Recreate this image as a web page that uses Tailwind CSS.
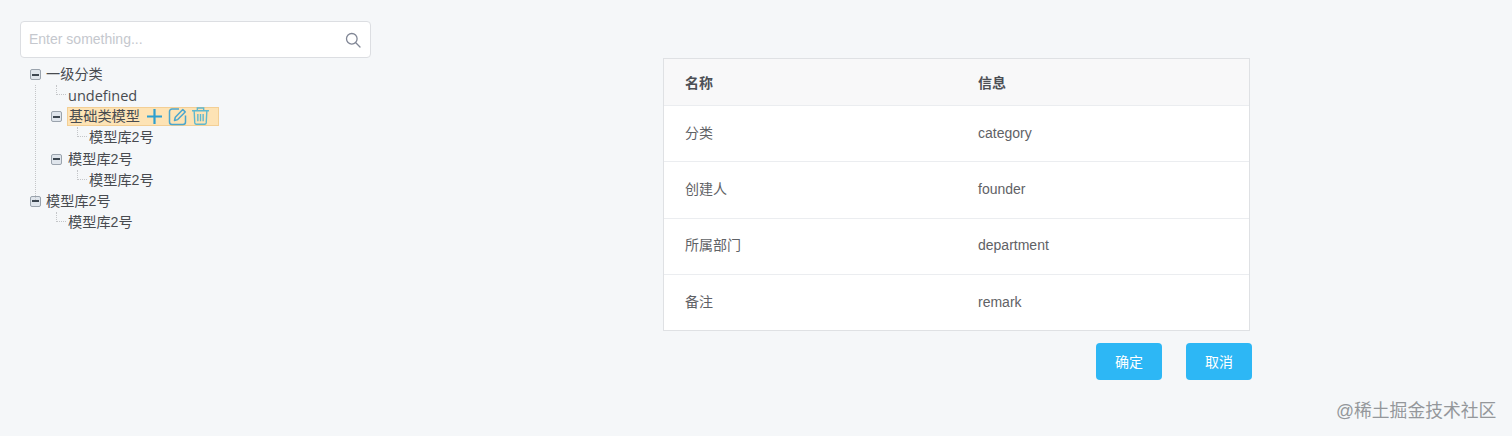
<!DOCTYPE html>
<html lang="en">

<head>
    <meta charset="UTF-8">
    <meta name="viewport" content="width=device-width, initial-scale=1.0">
    <script src="https://cdn.jsdelivr.net/npm/@tailwindcss/browser@4"></script>
    <title>Model tree</title>
</head>

<body class="relative h-[436px] overflow-hidden bg-[#f5f7f9] font-['Liberation_Sans','Noto_Sans_CJK_SC',sans-serif]">
    <div class="flex items-start">
        <!-- Left: search + tree -->
        <div class="ml-5 mt-[21px] w-[351px]">
            <div class="flex h-[37px] items-center justify-between rounded-[4px] border border-[#dcdee2] bg-white pb-0.5 pl-2 pr-2.5">
                <span class="text-sm text-[#c5c8ce]">Enter something...</span>
                <svg class="mr-[-1px] mt-0.5 h-4 w-4 text-[#808695]" viewBox="0 0 16 16" fill="none" stroke="currentColor" stroke-width="1.3">
                    <circle cx="6.8" cy="6.8" r="5.3"></circle>
                    <path d="M10.8 10.8l4.2 4.2" stroke-linecap="round"></path>
                </svg>
            </div>

            <ul class="relative mt-[6px] text-[14.2px] leading-[21px] text-[#484b50]">
                <span class="absolute left-[15px] top-[21px] h-[115px] border-l border-dotted border-[#c4c6c9]"></span>

                <li class="flex h-[21.150px] items-center pl-2.5">
                    <span class="mr-[5px] flex h-[11px] w-[11px] items-center justify-center rounded-[2px] border border-[#9aa3ad] bg-[#dfe5ec]"><span class="h-0.5 w-[7px] bg-[#3c4650]"></span></span>
                    <span>一级分类</span>
                </li>
                <li class="relative flex h-[21.150px] items-center pl-12">
                    <span class="absolute left-9 top-0 h-2.5 w-2.5 border-b border-l border-dotted border-[#c4c6c9]"></span>
                    <span class="font-['Open_Sans',sans-serif] text-[14.5px]">undefined</span>
                </li>

                <li class="flex h-[21.150px] items-center pl-[31px]">
                    <span class="mr-[5px] flex h-[11px] w-[11px] items-center justify-center rounded-[2px] border border-[#9aa3ad] bg-[#dfe5ec]"><span class="h-0.5 w-[7px] bg-[#3c4650]"></span></span>
                    <span class="-mt-px flex h-[19px] w-[152px] items-center border border-[#f3cf95] bg-[#fde3b5] pl-px">
                        <span class="mr-[7px]">基础类模型</span>
                        <svg class="h-[15px] w-[15px] text-[#2d9fd0]" viewBox="0 0 15 15" fill="none" stroke="currentColor" stroke-width="2.2"><path d="M7.5 0v15M0 7.5h15"></path></svg>
                        <svg class="ml-1.5 h-[19px] w-[19px] text-[#4aa6cf]" viewBox="0 0 19 19" fill="none" stroke="currentColor" stroke-width="1.5">
                            <path d="M11 2H4a2.500 2.500 0 0 0-2.500 2.500v10.500a2.500 2.500 0 0 0 2.500 2.500h11a2.500 2.500 0 0 0 2.500-2.500V8.500"></path>
                            <path d="M6.500 13.500l.8-3.300 7.500-7.700 2.400 2.400-7.500 7.700z" stroke-linejoin="round"></path>
                        </svg>
                        <svg class="ml-[5px] h-[18px] w-[17px] text-[#5db8cf]" viewBox="0 0 16 17" fill="none" stroke="currentColor" stroke-width="1.300">
                            <path d="M0 3.500h16M5 3.500V1h6v2.500M2 3.500l.6 11.500a1.500 1.500 0 0 0 1.500 1.300h7.800a1.500 1.500 0 0 0 1.500-1.300L14 3.500M5.500 6.500v7M8 6.500v7M10.500 6.500v7"></path>
                        </svg>
                    </span>
                </li>
                <li class="relative flex h-[21.150px] items-center pl-[69px]">
                    <span class="absolute left-[57px] top-0 h-2.5 w-2.5 border-b border-l border-dotted border-[#c4c6c9]"></span>
                    模型库2号
                </li>

                <li class="flex h-[21.150px] items-center pl-[31px]">
                    <span class="mr-1.5 flex h-[11px] w-[11px] items-center justify-center rounded-[2px] border border-[#9aa3ad] bg-[#dfe5ec]"><span class="h-0.5 w-[7px] bg-[#3c4650]"></span></span>
                    <span>模型库2号</span>
                </li>
                <li class="relative flex h-[21.150px] items-center pl-[69px]">
                    <span class="absolute left-[57px] top-0 h-2.5 w-2.5 border-b border-l border-dotted border-[#c4c6c9]"></span>
                    模型库2号
                </li>

                <li class="flex h-[21.150px] items-center pl-2.5">
                    <span class="mr-[5px] flex h-[11px] w-[11px] items-center justify-center rounded-[2px] border border-[#9aa3ad] bg-[#dfe5ec]"><span class="h-0.5 w-[7px] bg-[#3c4650]"></span></span>
                    <span>模型库2号</span>
                </li>
                <li class="relative flex h-[21.150px] items-center pl-12">
                    <span class="absolute left-9 top-0 h-2.5 w-2.5 border-b border-l border-dotted border-[#c4c6c9]"></span>
                    模型库2号
                </li>
            </ul>
        </div>

        <!-- Right: table + buttons -->
        <div class="ml-[292px] mt-[58px] w-[589px]">
            <div class="w-[587px] border border-[#dfe1e4] bg-white text-sm text-[#5f6266]">
                <div class="flex h-[46px] items-center bg-[#f8f8f9] pt-0.5 font-bold text-[#4c4f55]">
                    <div class="w-[293px] pl-[21px]">名称</div>
                    <div class="pl-[21px]">信息</div>
                </div>
                <div class="flex h-[56.250px] items-center border-t border-[#ebedf0] pb-0.5">
                    <div class="w-[293px] pl-[21px]">分类</div>
                    <div class="pl-[21px]">category</div>
                </div>
                <div class="flex h-[56.250px] items-center border-t border-[#ebedf0] pb-0.5">
                    <div class="w-[293px] pl-[21px]">创建人</div>
                    <div class="pl-[21px]">founder</div>
                </div>
                <div class="flex h-[56.250px] items-center border-t border-[#ebedf0] pb-0.5">
                    <div class="w-[293px] pl-[21px]">所属部门</div>
                    <div class="pl-[21px]">department</div>
                </div>
                <div class="flex h-[56.250px] items-center border-t border-[#ebedf0]">
                    <div class="w-[293px] pl-[21px]">备注</div>
                    <div class="pl-[21px]">remark</div>
                </div>
            </div>
            <div class="mt-3 flex justify-end gap-6">
                <button class="h-[37px] w-[66px] rounded-[4px] bg-[#2db7f5] text-sm text-white">确定</button>
                <button class="h-[37px] w-[66px] rounded-[4px] bg-[#2db7f5] text-sm text-white">取消</button>
            </div>
        </div>
    </div>

    <!-- Watermark -->
    <div class="absolute left-[1336px] top-[399px] whitespace-nowrap text-[17.8px] leading-6 text-[#94979b]">@稀土掘金技术社区</div>
</body>

</html>
